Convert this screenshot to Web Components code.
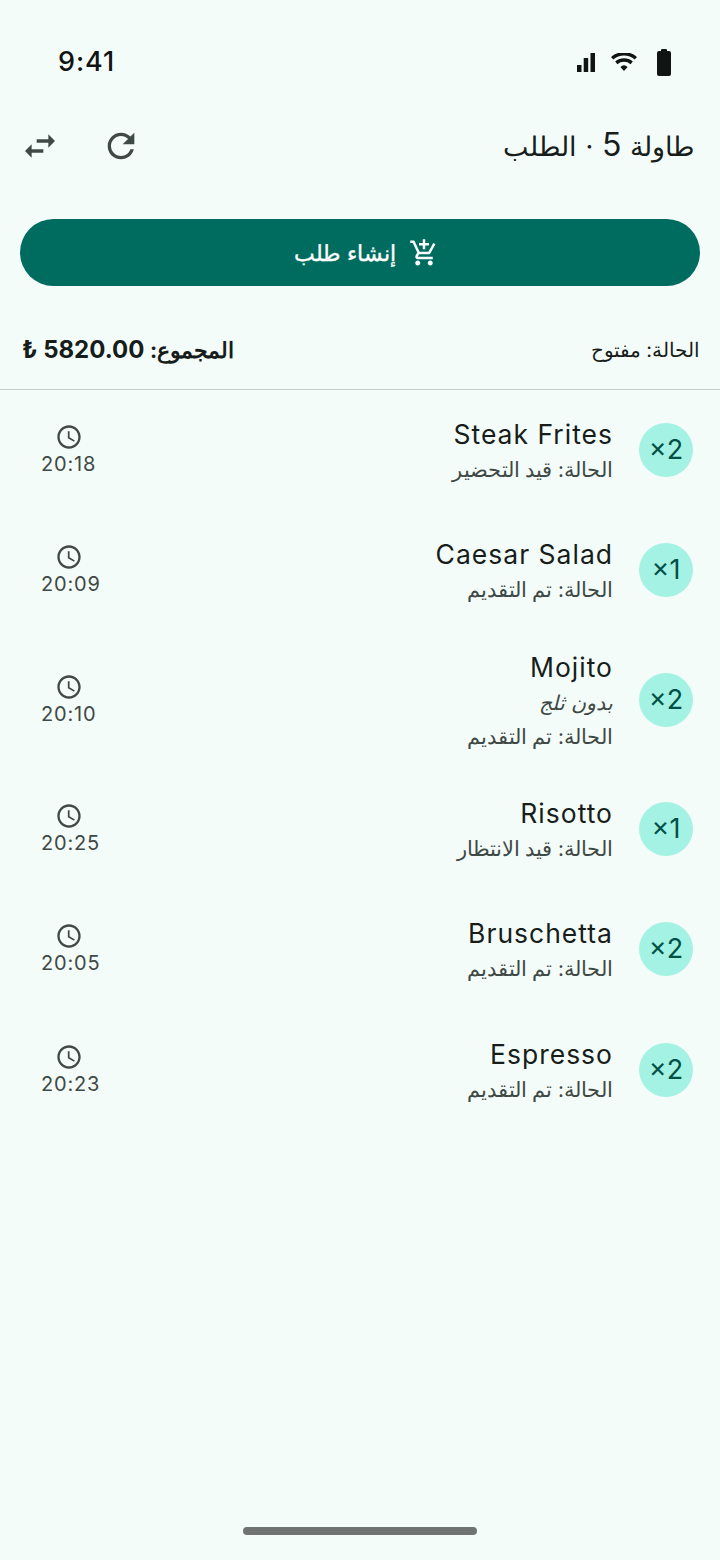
<!DOCTYPE html>
<html lang="ar" dir="rtl">
<head>
<meta charset="utf-8">
<title>طاولة 5 · الطلب</title>
<style>
  html, body { margin: 0; height: 100%; }
  body { background: #f4fcf9; color: #171d1b; font-family: Inter, "Noto Sans", sans-serif; }
  order-screen { height: 1560px; }
</style>
</head>
<body>
<order-screen>
  <status-bar slot="status"></status-bar>
  <app-bar slot="top">طاولة <span>5</span> · الطلب</app-bar>
  <action-button slot="action">إنشاء طلب</action-button>
  <order-summary slot="summary" status="الحالة: مفتوح" label="المجموع:" total="5820.00 ₺"></order-summary>
  <order-item qty="2" name="Steak Frites" status="الحالة: قيد التحضير" time="20:18"></order-item>
  <order-item qty="1" name="Caesar Salad" status="الحالة: تم التقديم" time="20:09"></order-item>
  <order-item qty="2" name="Mojito" note="بدون ثلج" status="الحالة: تم التقديم" time="20:10"></order-item>
  <order-item qty="1" name="Risotto" status="الحالة: قيد الانتظار" time="20:25"></order-item>
  <order-item qty="2" name="Bruschetta" status="الحالة: تم التقديم" time="20:05"></order-item>
  <order-item qty="2" name="Espresso" status="الحالة: تم التقديم" time="20:23"></order-item>
</order-screen>

<script>
class OrderScreen extends HTMLElement {
  constructor() {
    super();
    this.attachShadow({ mode: "open" }).innerHTML = `
      <style>
        :host { display: flex; flex-direction: column; position: relative; }
        .list { display: flex; flex-direction: column; }
        .handle { margin-top: auto; padding-bottom: 25px; display: flex; justify-content: center; }
        .handle i { display: block; width: 234px; height: 8px; border-radius: 4px; background: #6f7371; }
      </style>
      <slot name="status"></slot>
      <slot name="top"></slot>
      <slot name="action"></slot>
      <slot name="summary"></slot>
      <div class="list"><slot></slot></div>
      <div class="handle"><i></i></div>`;
  }
}

class StatusBar extends HTMLElement {
  constructor() {
    super();
    this.attachShadow({ mode: "open" }).innerHTML = `
      <style>
        :host { display: flex; direction: ltr; align-items: center; justify-content: space-between; height: 50px; padding: 37px 49px 0 58px; color: #101413; }
        .time { font: 500 27px/50px Inter, sans-serif; letter-spacing: .9px; }
        .icons { display: flex; align-items: center; }
        svg { display: block; fill: #101413; }
        .signal { margin-right: 16px; }
        .wifi { margin-right: 20px; }
      </style>
      <span class="time">9:41</span>
      <div class="icons">
        <svg class="signal" width="18" height="19" viewBox="0 0 18 19"><rect x="0" y="12" width="4.500" height="7"/><rect x="6.700" y="5" width="4.500" height="14"/><rect x="13.500" y="0" width="4.500" height="19"/></svg>
        <svg class="wifi" width="26" height="18" viewBox="0 0 26 18"><path d="M13 18l-3.600-4.100a5.500 5.500 0 0 1 7.200 0zM6.400 11.200L4.200 8.600a13.500 13.500 0 0 1 17.600 0l-2.200 2.600a10 10 0 0 0-13.200 0zM2.300 6.500L0 3.900a20 20 0 0 1 26 0l-2.300 2.600a16.500 16.500 0 0 0-21.400 0z"/></svg>
        <svg width="14" height="27" viewBox="0 0 14 27"><path d="M4 2V1a1 1 0 0 1 1-1h4a1 1 0 0 1 1 1v1h2a2 2 0 0 1 2 2v21a2 2 0 0 1-2 2H2a2 2 0 0 1-2-2V4a2 2 0 0 1 2-2z"/></svg>
      </div>`;
  }
}

class AppBar extends HTMLElement {
  constructor() {
    super();
    this.attachShadow({ mode: "open" }).innerHTML = `
      <style>
        :host { display: flex; align-items: center; justify-content: space-between; height: 70px; margin-top: 24px; padding: 0 26px 0 20px; }
        .title { font: 400 27px/44px Inter, "Noto Sans", sans-serif; color: #171d1b; word-spacing: 1px; }
        ::slotted(span) { font-size: 32px; font-weight: 400; }
        .actions { display: flex; align-items: center; gap: 41px; }
        svg { display: block; width: 40px; height: 40px; fill: #3f4946; }
      </style>
      <div class="title"><slot></slot></div>
      <div class="actions">
        <svg viewBox="0 0 24 24"><path d="M17.650 6.350A7.960 7.960 0 0 0 12 4c-4.420 0-7.990 3.580-7.990 8s3.570 8 7.990 8c3.730 0 6.840-2.550 7.730-6h-2.080A5.990 5.990 0 0 1 12 18c-3.310 0-6-2.690-6-6s2.690-6 6-6c1.660 0 3.140.69 4.220 1.780L13 11h7V4z"/></svg>
        <svg viewBox="0 0 24 24"><path d="M6.990 11L3 15l3.990 4v-3H14v-2H6.990zM21 9l-3.990-4v3H10v2h7.010v3z"/></svg>
      </div>`;
  }
}

class ActionButton extends HTMLElement {
  constructor() {
    super();
    this.attachShadow({ mode: "open" }).innerHTML = `
      <style>
        :host { display: block; margin: 38px 20px 0; }
        button { display: flex; align-items: center; justify-content: center; gap: 13px; width: 100%; height: 67px; padding: 0 0 0 13px; border: 0; border-radius: 34px; background: #006b5f; color: #fff; font: 500 22px/30px Inter, "Noto Sans", sans-serif; -webkit-text-stroke: .35px #fff; }
        svg { display: block; width: 30px; height: 30px; fill: #fff; }
      </style>
      <button>
        <svg viewBox="0 0 24 24"><path d="M11 9h2V6h3V4h-3V1h-2v3H8v2h3zm-4 9c-1.100 0-1.990.9-1.990 2S5.900 22 7 22s2-.9 2-2-.9-2-2-2zm10 0c-1.100 0-1.990.9-1.990 2s.89 2 1.990 2 2-.9 2-2-.9-2-2-2zm-9.830-3.250l.03-.12.900-1.630h7.450c.75 0 1.410-.41 1.750-1.030l3.860-7.010L19.420 4h-.01l-1.100 2-2.760 5H8.530l-.13-.27L6.160 6l-.95-2-.94-2H1v2h2l3.600 7.590-1.350 2.450c-.16.280-.25.610-.25.960 0 1.100.9 2 2 2h12v-2H7.420c-.13 0-.25-.110-.25-.250z"/></svg>
        <span><slot></slot></span>
      </button>`;
  }
}

class OrderSummary extends HTMLElement {
  constructor() {
    super();
    this.attachShadow({ mode: "open" }).innerHTML = `
      <style>
        :host { display: flex; align-items: center; justify-content: space-between; height: 103.500px; box-sizing: border-box; padding: 25px 22px 0 22px; border-bottom: 1.500px solid #c4cbc8; }
        .status { font: 400 20px/28px Inter, "Noto Sans", sans-serif; margin-right: -2px; }
        .total { font: 700 24px/32px Inter, "Noto Sans", sans-serif; letter-spacing: .7px; }
        .label { font-size: 21.500px; letter-spacing: 0; }
      </style>
      <span class="status"></span>
      <span class="total"><span class="label"></span> <span class="value"></span></span>`;
    const root = this.shadowRoot;
    root.querySelector(".status").textContent = this.getAttribute("status");
    root.querySelector(".label").textContent = this.getAttribute("label");
    root.querySelector(".value").textContent = this.getAttribute("total");
  }
}

class OrderItem extends HTMLElement {
  constructor() {
    super();
    this.attachShadow({ mode: "open" }).innerHTML = `
      <style>
        :host { display: flex; align-items: center; min-height: 120.500px; padding: 0 27px 0 41px; box-sizing: border-box; }
        .badge { flex: none; width: 54px; height: 54px; border-radius: 50%; display: flex; align-items: center; justify-content: center; background: #a4f2e3; color: #005046; font: 400 27px/36px Inter, sans-serif; direction: ltr; margin-left: 26px; }
        .text { flex: 1; min-width: 0; padding: 17px 0 15px; }
        .name { font: 400 26.500px/38px Inter, sans-serif; letter-spacing: 1px; color: #171d1b; direction: ltr; text-align: right; }
        .line { font: 400 20.500px/34px Inter, "Noto Sans", sans-serif; color: #3f4946; }
        .note { font-style: italic; }
        .time { flex: none; width: 56px; display: flex; flex-direction: column; align-items: center; color: #3f4946; font: 400 20px/26px Inter, sans-serif; letter-spacing: .8px; direction: ltr; }
        .clock { align-self: flex-start; white-space: nowrap; }
        svg { display: block; width: 28px; height: 28px; fill: #3f4946; }
      </style>
      <div class="badge"></div>
      <div class="text">
        <div class="name"></div>
        <div class="line note"></div>
        <div class="line status"></div>
      </div>
      <div class="time">
        <svg viewBox="0 0 24 24"><path d="M11.990 2C6.470 2 2 6.480 2 12s4.470 10 9.990 10C17.520 22 22 17.520 22 12S17.520 2 11.990 2zM12 20c-4.420 0-8-3.580-8-8s3.580-8 8-8 8 3.580 8 8-3.580 8-8 8zm.5-13H11v6l5.250 3.150.75-1.230-4.500-2.670z"/></svg>
        <span class="clock"></span>
      </div>`;
    const root = this.shadowRoot;
    root.querySelector(".badge").textContent = "×" + this.getAttribute("qty");
    root.querySelector(".name").textContent = this.getAttribute("name");
    root.querySelector(".status").textContent = this.getAttribute("status");
    root.querySelector(".clock").textContent = this.getAttribute("time");
    const note = root.querySelector(".note");
    if (this.hasAttribute("note")) note.textContent = this.getAttribute("note");
    else note.remove();
  }
}

customElements.define("order-screen", OrderScreen);
customElements.define("status-bar", StatusBar);
customElements.define("app-bar", AppBar);
customElements.define("action-button", ActionButton);
customElements.define("order-summary", OrderSummary);
customElements.define("order-item", OrderItem);
</script>
</body>
</html>
